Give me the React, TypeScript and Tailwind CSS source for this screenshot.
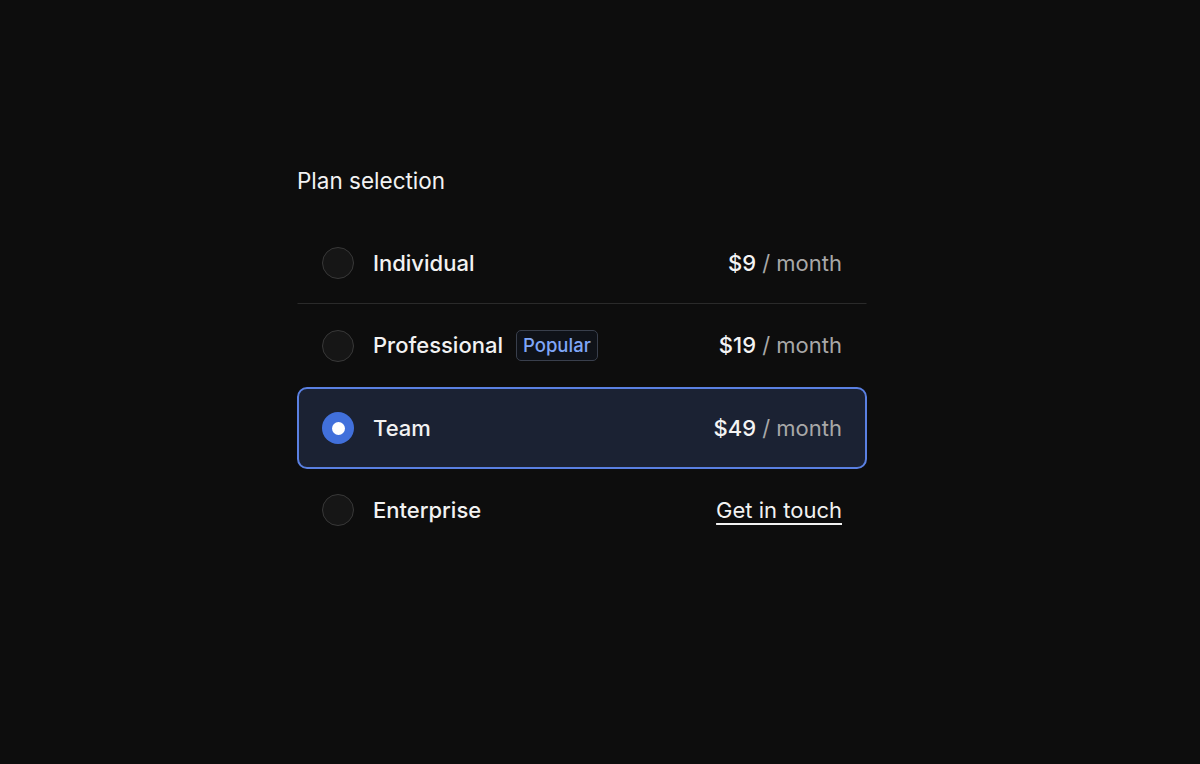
import React, { useState } from "react";

interface Plan {
  id: string;
  name: string;
  price?: string;
  badge?: string;
}

const plans: Plan[] = [
  { id: "individual", name: "Individual", price: "$9" },
  { id: "professional", name: "Professional", price: "$19", badge: "Popular" },
  { id: "team", name: "Team", price: "$49" },
  { id: "enterprise", name: "Enterprise" },
];

const App: React.FC = () => {
  const [selected, setSelected] = useState("team");
  const selectedIndex = plans.findIndex((p) => p.id === selected);

  return (
    <div
      className="min-h-screen bg-[#0d0d0d] text-white"
      style={{ fontFamily: "Inter, 'Noto Sans', sans-serif" }}
    >
      <div className="w-[570px] ml-[297px] pt-[166px]">
        <h2 className="text-[22.5px] leading-[30px] text-[#f2f2f2] mb-[26px]">
          Plan selection
        </h2>

        <div role="radiogroup" className="flex flex-col">
          {plans.map((plan, index) => {
            const isSelected = plan.id === selected;
            // divider only between two unselected rows
            const showDivider =
              index < plans.length - 1 &&
              !isSelected &&
              index + 1 !== selectedIndex;
            return (
              <div
                key={plan.id}
                role="radio"
                aria-checked={isSelected}
                onClick={() => setSelected(plan.id)}
                className={`flex items-center justify-between cursor-pointer ${
                  index === selectedIndex - 1 ? "h-[83px]" : "h-[82px]"
                } ${
                  isSelected
                    ? "bg-[#1b2233] border-2 border-[#5a80e2] rounded-[10px] px-[23px]"
                    : showDivider
                    ? "border border-transparent border-b-[#2a2a2a] px-6"
                    : "border border-transparent px-6"
                }`}
              >
                <div className="flex items-center">
                  {isSelected ? (
                    <div className="w-8 h-8 rounded-full bg-[#4170db] flex items-center justify-center">
                      <div className="w-[13px] h-[13px] rounded-full bg-white"></div>
                    </div>
                  ) : (
                    <div className="w-8 h-8 rounded-full bg-[#161616] border-[1.5px] border-[#383838]"></div>
                  )}
                  <span className="ml-[19px] text-[22px] font-[450] text-[#f2f2f2]">
                    {plan.name}
                  </span>
                  {plan.badge && (
                    <span className="ml-[13px] h-[31px] px-[6px] flex items-center rounded-[5px] border border-[#393f4c] bg-[#0f1218] text-[18.5px] font-[450] text-[#7fa6f7]">
                      {plan.badge}
                    </span>
                  )}
                </div>
                {plan.price ? (
                  <div className="text-[22px]">
                    <span className="text-[#f4f4f4] font-[450]">{plan.price}</span>
                    <span className="text-[#a8a8a8]"> / month</span>
                  </div>
                ) : (
                  <a
                    href="#"
                    className="text-[22px] text-[#f2f2f2] underline underline-offset-[5px] decoration-[1.5px]"
                  >
                    Get in touch
                  </a>
                )}
              </div>
            );
          })}
        </div>
      </div>
    </div>
  );
};

export default App;
